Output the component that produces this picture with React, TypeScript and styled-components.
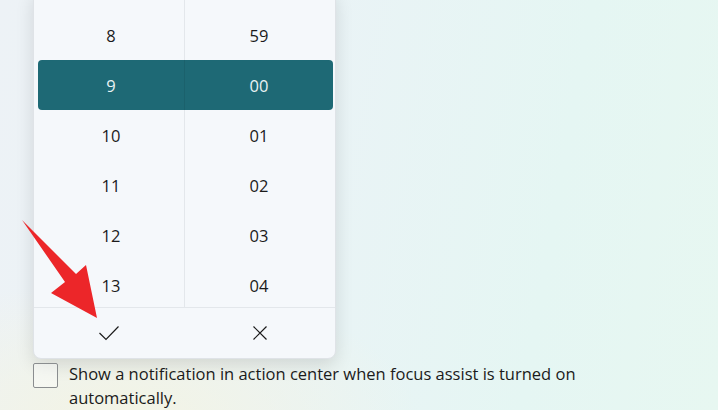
import React from "react";
import styled, { createGlobalStyle } from "styled-components";

const Global = createGlobalStyle`
  html, body { margin: 0; padding: 0; }
  body { font-family: "Open Sans", "Noto Sans", sans-serif; }
`;

const Page = styled.div`
  position: relative;
  width: 718px;
  height: 410px;
  overflow: hidden;
  background:
    radial-gradient(ellipse 300px 140px at 120px 420px, rgba(244, 244, 226, 0.9), rgba(244, 244, 226, 0) 100%),
    linear-gradient(100deg, #edf2f6 0%, #eaf3f6 40%, #e5f6f3 75%, #e7f7f1 100%);
  padding-left: 33px;
  box-sizing: border-box;
`;

const Panel = styled.div`
  width: 301px;
  margin-top: -10px;
  background: #f5f8fb;
  border: 1px solid #dfe3e7;
  border-radius: 8px;
  box-shadow: 0 6px 18px rgba(0, 0, 0, 0.12);
  overflow: hidden;
  box-sizing: content-box;
`;

const List = styled.div`
  height: 316px;
  padding-top: 19px;
  box-sizing: border-box;
  overflow: hidden;
  display: flex;
  flex-direction: column;
  background: linear-gradient(
    to right,
    transparent 150px,
    #e3e7eb 150px,
    #e3e7eb 151px,
    transparent 151px
  );
`;

const Row = styled.div<{ $selected?: boolean }>`
  flex: 0 0 50px;
  display: grid;
  grid-template-columns: 146px 1px 1fr;
  margin: 0 2px 0 4px;
  border-radius: 4px;
  background: ${(p) => (p.$selected ? "#1e6975" : "transparent")};
  color: ${(p) => (p.$selected ? "#e9f3f4" : "#1b1b1b")};
`;

const Divider = styled.div<{ $selected?: boolean }>`
  background: ${(p) => (p.$selected ? "#1b616c" : "transparent")};
`;

const Cell = styled.div`
  display: flex;
  align-items: center;
  justify-content: center;
  font-size: 16.5px;
`;

const Buttons = styled.div`
  height: 50px;
  border-top: 1px solid #e3e7eb;
  display: grid;
  grid-template-columns: 150px 1fr;
`;

const IconButton = styled.div`
  display: flex;
  align-items: center;
  justify-content: center;
  color: #1b1b1b;
`;

const OptionRow = styled.div`
  display: flex;
  align-items: flex-start;
  gap: 11px;
  margin-top: 4px;
`;

const Box = styled.div`
  flex: 0 0 auto;
  width: 23px;
  height: 23px;
  border: 1px solid #8a8d8f;
  border-radius: 2px;
  background: rgba(255, 255, 255, 0.35);
`;

const Label = styled.div`
  font-size: 16.5px;
  line-height: 24px;
  color: #1b1b1b;
  width: 580px;
  margin-top: -1px;
`;

const Arrow = styled.svg`
  position: absolute;
  left: 0;
  top: 0;
  pointer-events: none;
`;

const hours = ["8", "9", "10", "11", "12", "13"];
const mins = ["59", "00", "01", "02", "03", "04"];

export default function App() {
  return (
    <>
      <Global />
      <Page>
        <Panel>
          <List>
            {hours.map((h, i) => {
              const sel = h === "9";
              return (
                <Row key={h} $selected={sel}>
                  <Cell>{h}</Cell>
                  <Divider $selected={sel} />
                  <Cell>{mins[i]}</Cell>
                </Row>
              );
            })}
          </List>
          <Buttons>
            <IconButton>
              <svg width="22" height="16" viewBox="0 0 22 16">
                <polyline points="1.5,8 8,14.5 20.5,1.5" fill="none" stroke="currentColor" strokeWidth="1.2" />
              </svg>
            </IconButton>
            <IconButton>
              <svg width="16" height="16" viewBox="0 0 16 16">
                <path d="M1.5 1.5 L14.5 14.5 M14.5 1.5 L1.5 14.5" fill="none" stroke="currentColor" strokeWidth="1.2" />
              </svg>
            </IconButton>
          </Buttons>
        </Panel>
        <OptionRow>
          <Box />
          <Label>
            Show a notification in action center when focus assist is turned on automatically.
          </Label>
        </OptionRow>
        <Arrow width="718" height="410" viewBox="0 0 718 410">
          <polygon
            points="22,220 76,274 86,265 97,318 51,293 65,282"
            fill="#ec2629"
          />
        </Arrow>
      </Page>
    </>
  );
}
